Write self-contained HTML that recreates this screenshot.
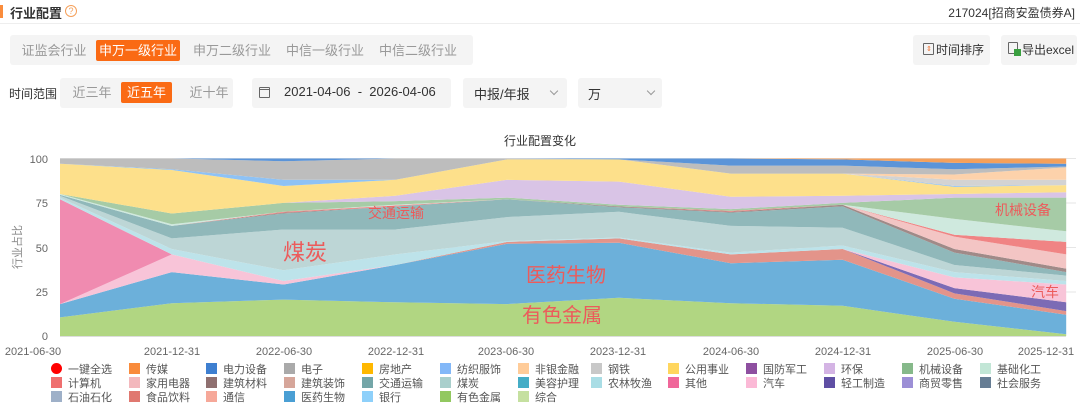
<!DOCTYPE html>
<html><head><meta charset="utf-8"><style>
*{margin:0;padding:0;box-sizing:border-box}
body{width:1080px;height:409px;background:#fff;font-family:"Liberation Sans","Noto Sans CJK SC",sans-serif;position:relative;overflow:hidden;color:#333}
.a{position:absolute;white-space:nowrap}
.tab{position:absolute;top:40px;height:21px;line-height:21px;font-size:13px;color:#999;text-align:center}
.on{background:#fa6a14;color:#fff;border-radius:2px}
.box{position:absolute;background:#f4f4f4;border-radius:3px}
.chev{position:absolute;width:6px;height:6px;border-right:1px solid #999;border-bottom:1px solid #999;transform:rotate(45deg)}
.lg{position:absolute;font-size:11px;color:#555;white-space:nowrap;line-height:12px}
.lg i{display:inline-block;width:11px;height:11px;vertical-align:-1px;margin-right:6px}
</style></head><body>
<div class="a" style="left:0;top:5px;width:3px;height:13px;background:#fa8c3c"></div>
<div class="a" style="left:10px;top:3px;font-size:13px;font-weight:bold;color:#333">行业配置</div>
<div class="a" style="left:65px;top:5px;width:12px;height:12px;border:1px solid #f5a05a;border-radius:50%;font-size:9px;line-height:10px;text-align:center;color:#f5a05a">?</div>
<div class="a" style="right:5px;top:4px;font-size:12px;color:#333">217024[招商安盈债券A]</div>
<div class="a" style="left:0;top:23px;width:1080px;height:1px;background:#eee"></div>

<div class="box" style="left:10px;top:35px;width:463px;height:30px"></div>
<div class="tab" style="left:16px;width:76px">证监会行业</div>
<div class="tab on" style="left:96px;width:84px">申万一级行业</div>
<div class="tab" style="left:190px;width:84px">申万二级行业</div>
<div class="tab" style="left:283px;width:84px">中信一级行业</div>
<div class="tab" style="left:376px;width:84px">中信二级行业</div>

<div class="box" style="left:913px;top:35px;width:77px;height:30px"></div>
<div class="a" style="left:923px;top:43px;width:11px;height:12px;border:1.2px solid #666;border-radius:1px"></div>
<div class="a" style="left:926px;top:45px;font-size:7px;color:#f07030">⇕</div>
<div class="a" style="left:936px;top:41px;font-size:12px;color:#333">时间排序</div>
<div class="box" style="left:1001px;top:35px;width:76px;height:30px"></div>
<div class="a" style="left:1008px;top:42px;width:10px;height:12px;border:1.2px solid #666;border-radius:1px"></div>
<div class="a" style="left:1014px;top:49px;width:7px;height:7px;background:#3aa040"></div>
<div class="a" style="left:1022px;top:41px;font-size:12px;color:#333">导出excel</div>

<div class="a" style="left:9px;top:85px;font-size:12px;color:#333">时间范围</div>
<div class="box" style="left:60px;top:78px;width:173px;height:30px"></div>
<div class="tab" style="left:67px;top:82px;width:50px">近三年</div>
<div class="tab on" style="left:121px;top:82px;width:51px">近五年</div>
<div class="tab" style="left:184px;top:82px;width:50px">近十年</div>
<div class="box" style="left:252px;top:78px;width:199px;height:30px"></div>
<div class="a" style="left:259px;top:87px;width:11px;height:11px;border:1.2px solid #666;border-radius:1px"></div>
<div class="a" style="left:259px;top:87px;width:11px;height:3px;border-bottom:1px solid #666"></div>
<div class="a" style="left:284px;top:84px;font-size:13px;color:#333">2021-04-06 &nbsp;- &nbsp;2026-04-06</div>
<div class="box" style="left:463px;top:78px;width:104px;height:30px"></div>
<div class="a" style="left:474px;top:84px;font-size:13px;color:#333">中报/年报</div>
<div class="chev" style="left:551px;top:88px"></div>
<div class="box" style="left:578px;top:78px;width:84px;height:30px"></div>
<div class="a" style="left:588px;top:84px;font-size:13px;color:#333">万</div>
<div class="chev" style="left:648px;top:88px"></div>

<svg class="a" style="left:0;top:0" width="1080" height="409" id="ch">
<g stroke="#e6e6e6" stroke-width="1">
<line x1="60" x2="1076" y1="158.5" y2="158.5"/><line x1="60" x2="1076" y1="203" y2="203"/><line x1="60" x2="1076" y1="247.5" y2="247.5"/><line x1="60" x2="1076" y1="292" y2="292"/>
</g>
<g id="areas"></g>
<line x1="60" x2="1066" y1="336.5" y2="336.5" stroke="#ddd"/>
<g font-size="11" fill="#666" text-anchor="end">
<text x="48" y="163">100</text><text x="48" y="207">75</text><text x="48" y="252">50</text><text x="48" y="296">25</text><text x="48" y="340">0</text>
</g>
<text transform="translate(21,247) rotate(-90)" font-size="11" fill="#888" text-anchor="middle">行业占比</text>
<text x="540" y="145" font-size="12" fill="#333" text-anchor="middle">行业配置变化</text>
<g font-size="11" fill="#666" text-anchor="middle">
<text x="33" y="355">2021-06-30</text><text x="172" y="355">2021-12-31</text><text x="284" y="355">2022-06-30</text><text x="396" y="355">2022-12-31</text><text x="506" y="355">2023-06-30</text><text x="618" y="355">2023-12-31</text><text x="731" y="355">2024-06-30</text><text x="843" y="355">2024-12-31</text><text x="955" y="355">2025-06-30</text><text x="1046" y="355">2025-12-31</text>
</g>
<g fill="#ec5b5b" text-anchor="middle">
<text x="396" y="218" font-size="14">交通运输</text>
<text x="305" y="260" font-size="22">煤炭</text>
<text x="566" y="282" font-size="20">医药生物</text>
<text x="562" y="322" font-size="20">有色金属</text>
<text x="1023" y="215" font-size="14">机械设备</text>
<text x="1045" y="297" font-size="14">汽车</text>
</g>
</svg>
<script>
var L=[
["#b1d682",[10.5,18.5,20.5,19,18,21.5,18.5,17,8,1]],
["#6cb0da",[18,36,29,40,52,52.5,41,43,21,12]],
["#e3948a",[18,36,29,40,53,55,46,49,24,14]],
["#7c6bb5",[18,36,29,40,53,55,46,49,27,19]],
["#f8c4d8",[18,46,31,40,53,55,46,49,33,29]],
["#f08bb0",[77,46,31,40,53,55,46,49,33,29]],
["#bde3ea",[78,49,37,46,53.5,55.5,47,51,36,31]],
["#bdd6d6",[79,55,60,60,67,70,62,61,40,34]],
["#90b8ba",[79.5,62,69,73,77,72.5,69.5,73,47,36]],
["#a08a88",[79.5,62,69.5,73,77,73,70,74,49,38]],
["#f3c5c4",[79.5,62,69.5,73,77,73,70,74,56,46]],
["#f08484",[79.5,62,70,73.5,77,73,70.5,74,57,53]],
["#cfe9de",[80,63,70,74,77,73,70.5,74,66,59]],
["#a6cba6",[80,69,75,76,78,74,71.5,75,78,78]],
["#d9c4e6",[80,69,75,79,88,87,78.5,79,80,81]],
["#fde08b",[97,93.5,84.5,88,99.5,99.5,91.5,91.5,84,85]],
["#8ec2f5",[97,94,88,88,99.5,99.5,91.5,91.5,84.5,85]],
["#d3d3d3",[97,94,88,88,99.5,99.5,91.5,91.5,88,88]],
["#fdd2ab",[97,94,88,88,99.5,99.5,91.5,91.5,91,95]],
["#bdbdbd",[100,100,98.5,100,100,99.5,96,96,94,95.5]],
["#5b94d8",[100,100,100,100,100,100,100,99.5,97.5,97]],
["#f5a05a",[100,100,100,100,100,100,100,100,100,100]]];
function X(i){return 60+i*111.8}function Y(v){return 336-v*1.775}
var prev=[0,0,0,0,0,0,0,0,0,0],s="";
L.forEach(function(l){var p=[];for(var i=0;i<10;i++)p.push(X(i).toFixed(1)+","+Y(l[1][i]).toFixed(1));for(var i=9;i>=0;i--)p.push(X(i).toFixed(1)+","+Y(prev[i]).toFixed(1));s+='<polygon fill="'+l[0]+'" points="'+p.join(" ")+'"/>';prev=l[1];});
document.getElementById("areas").innerHTML=s;
</script>
<div class="lg" style="left:51px;top:363px"><i style="background:#f00;border-radius:50%"></i>一键全选</div>
<div class="lg" style="left:129px;top:363px"><i style="background:#f98b3b"></i>传媒</div>
<div class="lg" style="left:206px;top:363px"><i style="background:#3e7fd0"></i>电力设备</div>
<div class="lg" style="left:284px;top:363px"><i style="background:#aaa"></i>电子</div>
<div class="lg" style="left:362px;top:363px"><i style="background:#ffb800"></i>房地产</div>
<div class="lg" style="left:440px;top:363px"><i style="background:#83b8f8"></i>纺织服饰</div>
<div class="lg" style="left:518px;top:363px"><i style="background:#ffcc99"></i>非银金融</div>
<div class="lg" style="left:591px;top:363px"><i style="background:#c8c8c8"></i>钢铁</div>
<div class="lg" style="left:668px;top:363px"><i style="background:#ffd65e"></i>公用事业</div>
<div class="lg" style="left:746px;top:363px"><i style="background:#8e4fa0"></i>国防军工</div>
<div class="lg" style="left:824px;top:363px"><i style="background:#d4b4e4"></i>环保</div>
<div class="lg" style="left:902px;top:363px"><i style="background:#86b98a"></i>机械设备</div>
<div class="lg" style="left:980px;top:363px"><i style="background:#c2e6d6"></i>基础化工</div>
<div class="lg" style="left:51px;top:377px"><i style="background:#ef6f6f"></i>计算机</div>
<div class="lg" style="left:129px;top:377px"><i style="background:#f3b8bd"></i>家用电器</div>
<div class="lg" style="left:206px;top:377px"><i style="background:#8f7070"></i>建筑材料</div>
<div class="lg" style="left:284px;top:377px"><i style="background:#d6a69a"></i>建筑装饰</div>
<div class="lg" style="left:362px;top:377px"><i style="background:#74a6a8"></i>交通运输</div>
<div class="lg" style="left:440px;top:377px"><i style="background:#a9cfcc"></i>煤炭</div>
<div class="lg" style="left:518px;top:377px"><i style="background:#45adc6"></i>美容护理</div>
<div class="lg" style="left:591px;top:377px"><i style="background:#a9dde5"></i>农林牧渔</div>
<div class="lg" style="left:668px;top:377px"><i style="background:#f0679a"></i>其他</div>
<div class="lg" style="left:746px;top:377px"><i style="background:#fbb9d6"></i>汽车</div>
<div class="lg" style="left:824px;top:377px"><i style="background:#5f4fa4"></i>轻工制造</div>
<div class="lg" style="left:902px;top:377px"><i style="background:#9c8fd6"></i>商贸零售</div>
<div class="lg" style="left:980px;top:377px"><i style="background:#667d94"></i>社会服务</div>
<div class="lg" style="left:51px;top:391px"><i style="background:#9eb0c8"></i>石油石化</div>
<div class="lg" style="left:129px;top:391px"><i style="background:#e07870"></i>食品饮料</div>
<div class="lg" style="left:206px;top:391px"><i style="background:#f6a899"></i>通信</div>
<div class="lg" style="left:284px;top:391px"><i style="background:#4a9fd4"></i>医药生物</div>
<div class="lg" style="left:362px;top:391px"><i style="background:#8ed0fa"></i>银行</div>
<div class="lg" style="left:440px;top:391px"><i style="background:#92c860"></i>有色金属</div>
<div class="lg" style="left:518px;top:391px"><i style="background:#c5e0a0"></i>综合</div>
</body></html>
